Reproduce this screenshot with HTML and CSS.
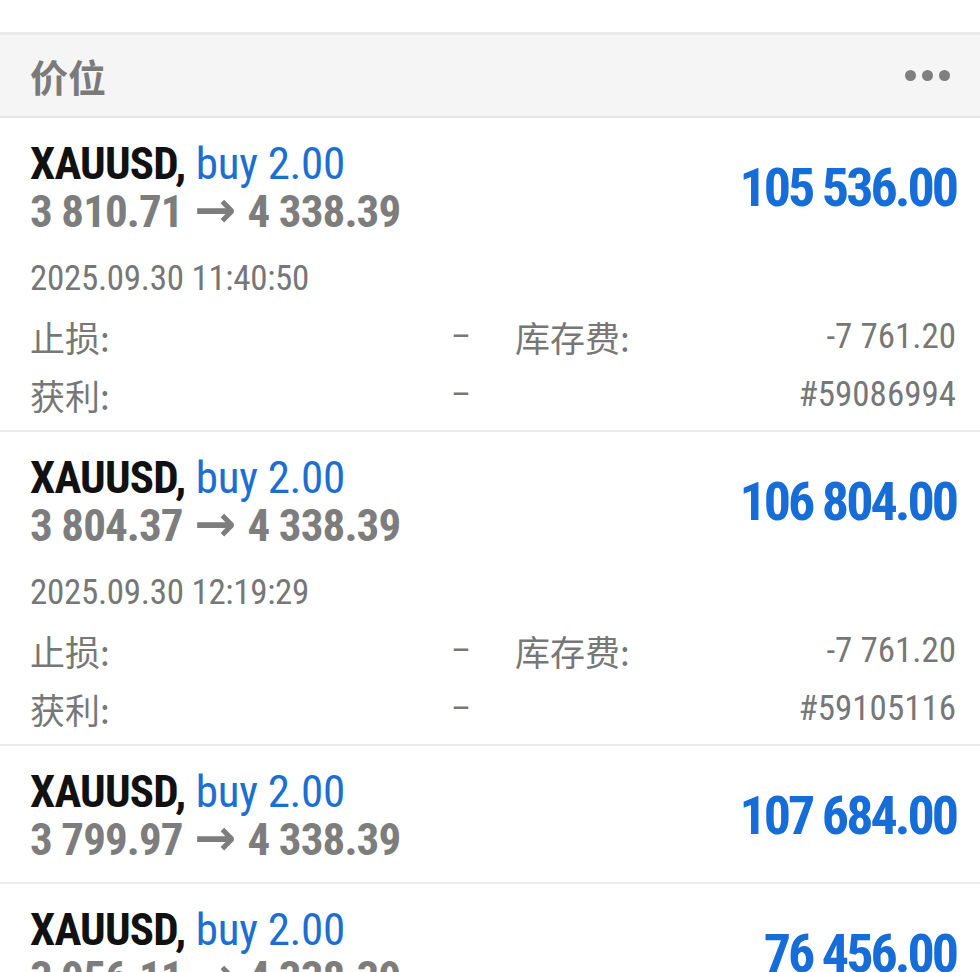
FILE: index.html
```html
<!DOCTYPE html>
<html lang="zh">
<head>
    <meta charset="UTF-8">
    <meta name="viewport" content="width=device-width, initial-scale=1.0">
    <title>价位</title>
    <link rel="stylesheet" href="styles.css">
</head>
<body>

    <div class="topbar"></div>

    <div class="section-head">
        <span class="section-title">价位</span>
        <span class="more"><i></i><i></i><i></i></span>
    </div>

    <div class="positions">
        <div class="row open">
            <div class="row-top">
                <div>
                    <div class="title"><b>XAUUSD,</b> <span class="side">buy 2.00</span></div>
                    <div class="prices">3 810.71 <span class="arrow">→</span> 4 338.39</div>
                </div>
                <div class="profit">105 536.00</div>
            </div>
            <div class="details">
                <div class="time">2025.09.30 11:40:50</div>
                <div class="pair"><span>止损:</span><span>–</span></div>
                <div class="pair"><span>库存费:</span><span>-7 761.20</span></div>
                <div class="pair"><span>获利:</span><span>–</span></div>
                <div class="pair"><span></span><span>#59086994</span></div>
            </div>
        </div>

        <div class="row open">
            <div class="row-top">
                <div>
                    <div class="title"><b>XAUUSD,</b> <span class="side">buy 2.00</span></div>
                    <div class="prices">3 804.37 <span class="arrow">→</span> 4 338.39</div>
                </div>
                <div class="profit">106 804.00</div>
            </div>
            <div class="details">
                <div class="time">2025.09.30 12:19:29</div>
                <div class="pair"><span>止损:</span><span>–</span></div>
                <div class="pair"><span>库存费:</span><span>-7 761.20</span></div>
                <div class="pair"><span>获利:</span><span>–</span></div>
                <div class="pair"><span></span><span>#59105116</span></div>
            </div>
        </div>

        <div class="row">
            <div class="row-top">
                <div>
                    <div class="title"><b>XAUUSD,</b> <span class="side">buy 2.00</span></div>
                    <div class="prices">3 799.97 <span class="arrow">→</span> 4 338.39</div>
                </div>
                <div class="profit">107 684.00</div>
            </div>
        </div>

        <div class="row">
            <div class="row-top">
                <div>
                    <div class="title"><b>XAUUSD,</b> <span class="side">buy 2.00</span></div>
                    <div class="prices">3 956.11 <span class="arrow">→</span> 4 338.39</div>
                </div>
                <div class="profit">76 456.00</div>
            </div>
        </div>
    </div>

</body>
</html>
```

FILE: styles.css
```css
body {
    margin: 0; background: #fff; overflow: hidden;
    font-family: "Roboto Condensed", "Liberation Sans Narrow", "DejaVu Sans Condensed", "Noto Sans CJK SC", sans-serif;
}
.topbar { height: 32px; }
.section-head {
    display: flex; justify-content: space-between; align-items: center;
    height: 81px; padding: 0 30px 0 30px;
    background: #f5f5f5; border-top: 3px solid #e9e9e9; border-bottom: 2px solid #e6e6e6;
}
.section-title { font-family: "Noto Sans CJK SC", sans-serif; font-size: 38px; font-weight: bold; color: #7a7a7a; }
.more { display: flex; gap: 6px; }
.more i { width: 11px; height: 11px; border-radius: 50%; background: #7f7f7f; }

.row { padding: 22px 24px 18px 30px; border-bottom: 2px solid #ebebeb; }
.row.open { padding-bottom: 6px; }
.row-top { display: flex; justify-content: space-between; align-items: center; }
.title { font-size: 45px; line-height: 48px; color: #111; white-space: nowrap; }
.title b { letter-spacing: -0.8px; }
.side { color: #1c6fd1; letter-spacing: -0.3px; }
.prices { font-size: 45px; font-weight: bold; line-height: 48px; color: #7d7d7d; white-space: nowrap; letter-spacing: -0.9px; }
.arrow { font-family: "DejaVu Sans", sans-serif; font-size: 50px; line-height: 40px; letter-spacing: 0; margin: 0 2px; }
.profit { font-size: 54px; font-weight: bold; line-height: 60px; color: #166dd8; letter-spacing: -3px; }

.details {
    display: grid; grid-template-columns: 1fr 1fr; column-gap: 44px;
    margin-top: 14px; font-size: 35px; line-height: 58px; color: #777;
}
.time { grid-column: 1 / 3; letter-spacing: -0.3px; }
.pair { display: flex; justify-content: space-between; }
.pair span:first-child { font-family: "Noto Sans CJK SC", sans-serif; }
```
